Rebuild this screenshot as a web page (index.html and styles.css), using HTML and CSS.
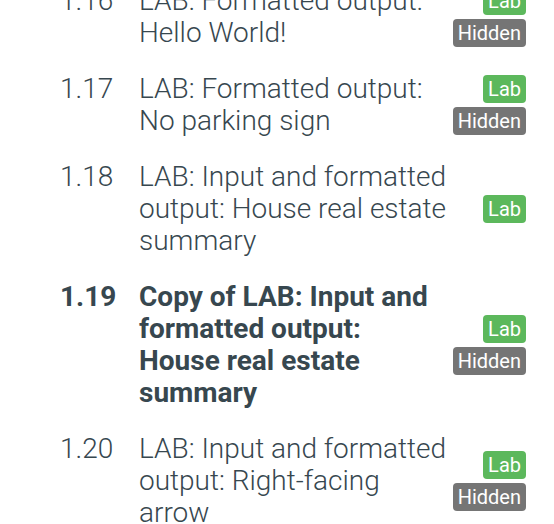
FILE: index.html
```html
<!DOCTYPE html>
<html lang="en">
<head>
<meta charset="utf-8">
<title>Sections</title>
<link rel="stylesheet" href="styles.css">
</head>
<body>
<ul class="toc">
  <li class="toc-row">
    <span class="toc-num">1.16</span>
    <span class="toc-title">LAB: Formatted output: Hello World!</span>
    <span class="toc-tags"><span class="tag tag-lab">Lab</span><span class="tag tag-hidden">Hidden</span></span>
  </li>
  <li class="toc-row">
    <span class="toc-num">1.17</span>
    <span class="toc-title">LAB: Formatted output: No parking sign</span>
    <span class="toc-tags"><span class="tag tag-lab">Lab</span><span class="tag tag-hidden">Hidden</span></span>
  </li>
  <li class="toc-row">
    <span class="toc-num">1.18</span>
    <span class="toc-title">LAB: Input and formatted output: House real estate summary</span>
    <span class="toc-tags"><span class="tag tag-lab">Lab</span></span>
  </li>
  <li class="toc-row is-current">
    <span class="toc-num">1.19</span>
    <span class="toc-title">Copy of LAB: Input and formatted output: House real estate summary</span>
    <span class="toc-tags"><span class="tag tag-lab">Lab</span><span class="tag tag-hidden">Hidden</span></span>
  </li>
  <li class="toc-row">
    <span class="toc-num">1.20</span>
    <span class="toc-title">LAB: Input and formatted output: Right-facing arrow</span>
    <span class="toc-tags"><span class="tag tag-lab">Lab</span><span class="tag tag-hidden">Hidden</span></span>
  </li>
</ul>
</body>
</html>
```

FILE: styles.css
```css
html, body {
  margin: 0;
  padding: 0;
  background: #ffffff;
}

body {
  font-family: Roboto, "Liberation Sans", sans-serif;
  color: #37474f;
  overflow: hidden;
}

.toc {
  list-style: none;
  margin: -15px 0 0 0;
  padding: 0 0 0 60px;
  width: 466px;
  display: flex;
  flex-direction: column;
  gap: 24px;
}

.toc-row {
  display: flex;
  align-items: center;
  font-size: 28px;
  line-height: 32px;
  font-weight: 300;
}

.toc-num {
  flex: 0 0 79px;
  align-self: flex-start;
}

.toc-title {
  flex: 0 0 310px;
}

.toc-row.is-current {
  font-weight: 700;
}

/* the bold heading of the open section runs a touch narrower */
.toc-row.is-current .toc-title {
  flex-basis: 300px;
}

.toc-tags {
  flex: 1;
  display: flex;
  flex-direction: column;
  align-items: flex-end;
  gap: 4px;
}

.tag {
  display: block;
  font-size: 20px;
  font-weight: 400;
  line-height: 28px;
  padding: 0 5px;
  border-radius: 4px;
  color: #ffffff;
}

.tag-lab {
  background: #5cb85c;
}

.tag-hidden {
  background: #757575;
}
```
